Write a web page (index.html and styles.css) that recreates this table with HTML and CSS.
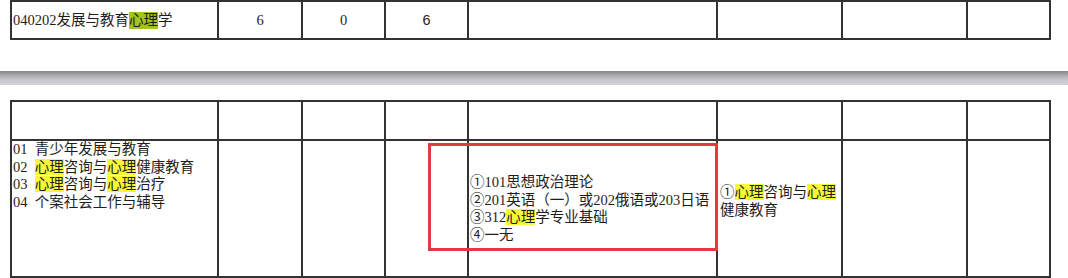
FILE: index.html
```html
<!DOCTYPE html>
<html lang="zh-CN">
<head>
<meta charset="utf-8">
<title>专业目录</title>
<link rel="stylesheet" href="styles.css">
</head>
<body>
  <div class="grid grid-top">
    <div class="cell cell-name">040202发展与教育<span class="hl-green">心理</span>学</div>
    <div class="cell cell-num">6</div>
    <div class="cell cell-num">0</div>
    <div class="cell cell-num sans">6</div>
    <div class="cell"></div>
    <div class="cell"></div>
    <div class="cell"></div>
    <div class="cell"></div>
  </div>

  <div class="divider"></div>

  <div class="sheet">
    <div class="grid grid-bottom">
      <div class="cell"></div>
      <div class="cell"></div>
      <div class="cell"></div>
      <div class="cell"></div>
      <div class="cell"></div>
      <div class="cell"></div>
      <div class="cell"></div>
      <div class="cell"></div>

      <div class="cell cell-dirs">
        <div>01&ensp;青少年发展与教育</div>
        <div>02&ensp;<span class="hl">心理</span>咨询与<span class="hl">心理</span>健康教育</div>
        <div>03&ensp;<span class="hl">心理</span>咨询与<span class="hl">心理</span>治疗</div>
        <div>04&ensp;个案社会工作与辅导</div>
      </div>
      <div class="cell"></div>
      <div class="cell"></div>
      <div class="cell"></div>
      <div class="cell cell-exam">
        <div>①101思想政治理论</div>
        <div>②201英语（一）或202俄语或203日语</div>
        <div>③312<span class="hl">心理</span>学专业基础</div>
        <div>④一无</div>
      </div>
      <div class="cell cell-retest">
        <div class="retest-text">①<span class="hl">心理</span>咨询与<span class="hl">心理</span>健康教育</div>
      </div>
      <div class="cell"></div>
      <div class="cell"></div>
    </div>
    <div class="mark"></div>
  </div>
</body>
</html>
```

FILE: styles.css
```css
html, body {
  margin: 0;
  padding: 0;
  background: #ffffff;
}

body {
  width: 1068px;
  height: 278px;
  overflow: hidden;
  font-family: "Liberation Serif", "Noto Sans CJK SC", serif;
  font-size: 14.5px;
  line-height: 17.5px;
  color: #1e1e1e;
}

.grid {
  display: grid;
  grid-template-columns: 205px 82px 81px 81px 247px 123px 123px 81px;
  gap: 2px;
  padding: 2px;
  background: #333333;
  width: max-content;
  margin-left: 10px;
}

.grid-top {
  grid-template-rows: 36px;
}

.grid-bottom {
  grid-template-rows: 37px 135px;
}

.cell {
  background: #ffffff;
  min-width: 0;
}

.cell-name {
  display: flex;
  align-items: center;
  padding-left: 1px;
  padding-top: 1px;
  white-space: nowrap;
}

.cell-num {
  display: flex;
  align-items: center;
  justify-content: center;
  padding-top: 1px;
}

.sans {
  font-family: "Liberation Sans", sans-serif;
}

.hl-green {
  background: #a3c41c;
}

.hl {
  background: #f8f83a;
}

.divider {
  margin-top: 31px;
  height: 14px;
  background: linear-gradient(#858585 0%, #a9a9ab 30%, #c6c6ca 60%, #d3d3d9 100%);
}

.sheet {
  position: relative;
  margin-top: 15px;
}

.cell-dirs {
  padding-left: 1px;
  white-space: nowrap;
}

.cell-exam {
  display: flex;
  flex-direction: column;
  justify-content: center;
  padding-left: 1px;
  padding-top: 1px;
  white-space: nowrap;
}

.cell-retest {
  display: flex;
  align-items: center;
  padding-left: 2px;
  padding-bottom: 14px;
}

.retest-text {
  width: 120px;
}

.mark {
  position: absolute;
  left: 428px;
  top: 43px;
  width: 284px;
  height: 102px;
  border: 3px solid #e23a40;
}
```
